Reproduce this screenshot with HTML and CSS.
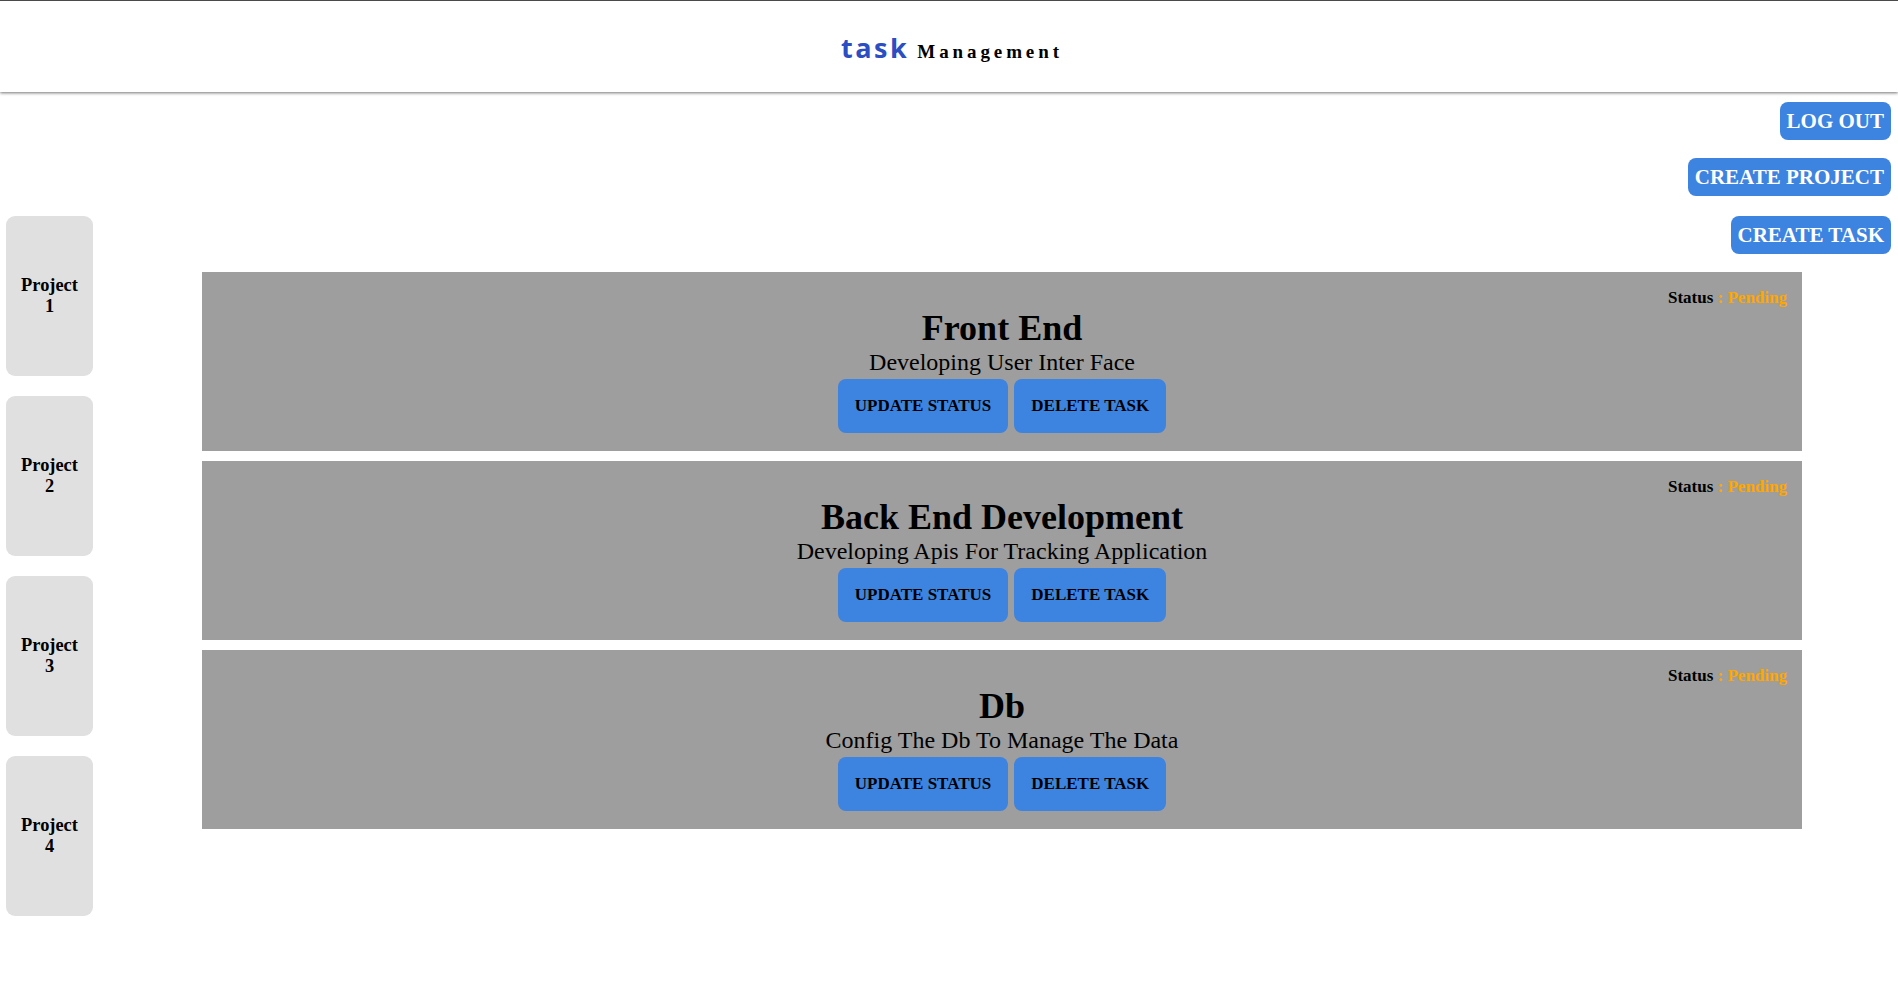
FILE: index.html
```html
<!DOCTYPE html>
<html lang="en">
<head>
<meta charset="utf-8">
<title>task Management</title>
<link rel="stylesheet" href="styles.css">
</head>
<body>
<header class="topbar">
  <h1 class="brand"><span class="brand-task">task</span> <span class="brand-rest">Management</span></h1>
</header>
<div class="actions">
  <button class="action-btn">LOG OUT</button>
  <button class="action-btn">CREATE PROJECT</button>
</div>
<div class="workspace">
  <nav class="sidebar">
    <div class="project">Project 1</div>
    <div class="project">Project 2</div>
    <div class="project">Project 3</div>
    <div class="project">Project 4</div>
  </nav>
  <main class="content">
    <div class="content-actions">
      <button class="action-btn">CREATE TASK</button>
    </div>
    <div class="tasks">
      <section class="task">
        <div class="status">Status <span class="status-value">: Pending</span></div>
        <h2 class="task-title">Front End</h2>
        <p class="task-desc">Developing User Inter Face</p>
        <div class="task-buttons">
          <button class="task-btn">UPDATE STATUS</button>
          <button class="task-btn">DELETE TASK</button>
        </div>
      </section>
      <section class="task">
        <div class="status">Status <span class="status-value">: Pending</span></div>
        <h2 class="task-title">Back End Development</h2>
        <p class="task-desc">Developing Apis For Tracking Application</p>
        <div class="task-buttons">
          <button class="task-btn">UPDATE STATUS</button>
          <button class="task-btn">DELETE TASK</button>
        </div>
      </section>
      <section class="task">
        <div class="status">Status <span class="status-value">: Pending</span></div>
        <h2 class="task-title">Db</h2>
        <p class="task-desc">Config The Db To Manage The Data</p>
        <div class="task-buttons">
          <button class="task-btn">UPDATE STATUS</button>
          <button class="task-btn">DELETE TASK</button>
        </div>
      </section>
    </div>
  </main>
</div>
</body>
</html>
```
FILE: styles.css
```css
* { box-sizing: border-box; }
html, body { margin: 0; padding: 0; background: #fff; }
body {
  font-family: "Liberation Serif", "Times New Roman", serif;
  color: #000;
}
.topbar {
  height: 92px;
  border-top: 1px solid #4a4a4a;
  box-shadow: 0 1px 3px rgba(0,0,0,0.55);
  display: flex;
  align-items: center;
  justify-content: center;
}
.brand {
  margin: 0;
  padding-top: 2px;
  padding-left: 6px;
  font-weight: bold;
  white-space: nowrap;
}
.brand-task {
  font-family: "Open Sans", "DejaVu Sans", sans-serif;
  font-size: 27px;
  letter-spacing: 2.5px;
  color: #2b4ec2;
}
.brand-rest {
  font-family: "Liberation Serif", serif;
  font-size: 19px;
  letter-spacing: 3.9px;
  color: #000;
}
.actions {
  display: flex;
  flex-direction: column;
  align-items: flex-end;
  gap: 18px;
  padding: 10px 7px 0 0;
}
.action-btn {
  font-family: "Liberation Serif", serif;
  font-weight: bold;
  font-size: 21px;
  line-height: 24px;
  color: #fff;
  background: #3d83e0;
  border: none;
  border-radius: 8px;
  padding: 7px 7px;
  cursor: pointer;
}
.workspace {
  display: flex;
  margin-top: 20px;
}
.sidebar {
  display: flex;
  flex-direction: column;
  gap: 20px;
  margin-left: 6px;
  width: 87px;
  flex: none;
}
.project {
  height: 160px;
  background: #e0e0e0;
  border-radius: 9px;
  display: flex;
  align-items: center;
  justify-content: center;
  text-align: center;
  padding: 0 12px;
  font-weight: bold;
  font-size: 18.4px;
}
.content {
  flex: 1;
  display: flex;
  flex-direction: column;
  padding-right: 7px;
  padding-left: 20px;
}
.content-actions {
  display: flex;
  justify-content: flex-end;
}
.tasks {
  margin-top: 18px;
  display: flex;
  flex-direction: column;
  gap: 10px;
  width: 1600px;
  align-self: center;
}
.task {
  background: #9e9e9e;
  padding: 16px 15px 18px;
  text-align: center;
  height: 179px;
}
.status {
  text-align: right;
  font-weight: bold;
  font-size: 17px;
  line-height: 20px;
}
.status-value { color: #ffa500; }
.task-title {
  margin: 0;
  font-size: 36px;
  line-height: 40px;
  font-weight: bold;
}
.task-desc {
  margin: 0;
  font-size: 24px;
  line-height: 28px;
}
.task-buttons {
  margin-top: 3px;
  display: flex;
  justify-content: center;
  gap: 6px;
}
.task-btn {
  font-family: "Liberation Serif", serif;
  font-weight: bold;
  font-size: 17px;
  line-height: 18px;
  height: 54px;
  padding: 0 17px;
  background: #3d83e0;
  color: #000;
  border: none;
  border-radius: 8px;
  cursor: pointer;
}
```
